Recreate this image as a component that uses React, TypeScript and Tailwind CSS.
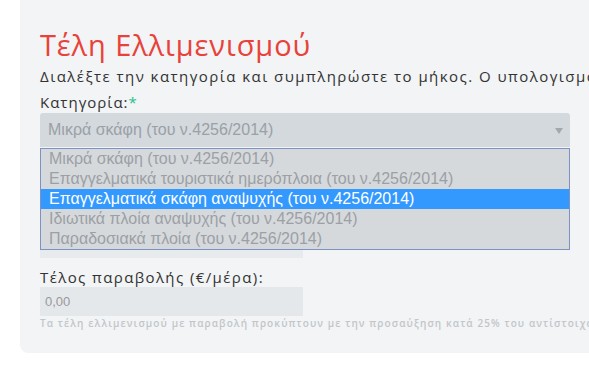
import React from "react";

const options = [
  "Μικρά σκάφη (του ν.4256/2014)",
  "Επαγγελματικά τουριστικά ημερόπλοια (του ν.4256/2014)",
  "Επαγγελματικά σκάφη αναψυχής (του ν.4256/2014)",
  "Ιδιωτικά πλοία αναψυχής (του ν.4256/2014)",
  "Παραδοσιακά πλοία (του ν.4256/2014)",
];

const App = () => {
  const selected = 2;

  return (
    <div className="w-[589px] h-[392px] overflow-hidden bg-white font-['Open_Sans',sans-serif]">
      <div className="ml-[20px] w-[600px] h-[353px] bg-[#f2f4f5] rounded-bl-lg pl-[20px] pt-[26px]">
        <h1 className="text-[29px] leading-[37px] font-medium text-[#e8423a] tracking-[0.9px] whitespace-nowrap">
          Τέλη Ελλιμενισμού
        </h1>
        <p className="mt-[3px] text-[15px] leading-[20px] tracking-[1.45px] text-[#333] whitespace-nowrap">
          Διαλέξτε την κατηγορία και συμπληρώστε το μήκος. Ο υπολογισμός γίνεται αυτόματα.
        </p>

        <div className="mt-[6px] w-[530px]">
          <label className="block text-[15px] leading-[20px] tracking-[1px] text-[#333]">
            Κατηγορία:<span className="text-[#2bbf8a]">*</span>
          </label>
          <div className="relative mt-[1px]">
            <div className="h-[34px] bg-[#d4d9dd] rounded-t-[3px] flex items-center justify-between pl-[8px] pr-[6px] font-['Liberation_Sans',Arial,sans-serif] text-[16px] text-[#9aa0a6]">
              <span>{options[0]}</span>
              <svg width="8" height="6" viewBox="0 0 8 6" className="mr-[1px] mt-[1px]">
                <path d="M0 0 L8 0 L4 6 Z" fill="#a3a8ad" />
              </svg>
            </div>
            <ul className="absolute left-0 top-[35px] z-10 w-[530px] border border-[#7d92c2] bg-[#d6d9dc] font-['Liberation_Sans',Arial,sans-serif] text-[16px] leading-[20px]">
              {options.map((o, i) => (
                <li
                  key={i}
                  className={
                    i === selected
                      ? "h-[20px] pl-[8px] bg-[#3399ff] text-white"
                      : "h-[20px] pl-[8px] text-[#9ba0a5]"
                  }
                >
                  {o}
                </li>
              ))}
            </ul>
          </div>

          {/* field hidden under the open list */}
          <div className="mt-[82px] h-[29px] w-[263px] bg-[#e8ebee]" />

          <div className="mt-[4px]">
            <label className="block h-[25px] pt-[5px] text-[15px] leading-[20px] tracking-[1.4px] text-[#333]">
              Τέλος παραβολής (€/μέρα):
            </label>
            <div className="h-[29px] w-[263px] bg-[#e5e8eb] flex items-center pl-[5px] font-['Liberation_Sans',Arial,sans-serif] text-[13px] text-[#999]">
              0,00
            </div>
            <p className="mt-[1px] text-[10px] leading-[13px] font-semibold tracking-[1.1px] text-[#c2c6ca] whitespace-nowrap">
              Τα τέλη ελλιμενισμού με παραβολή προκύπτουν με την προσαύξηση κατά 25% του αντίστοιχου τέλους.
            </p>
          </div>
        </div>
      </div>
    </div>
  );
};

export default App;
